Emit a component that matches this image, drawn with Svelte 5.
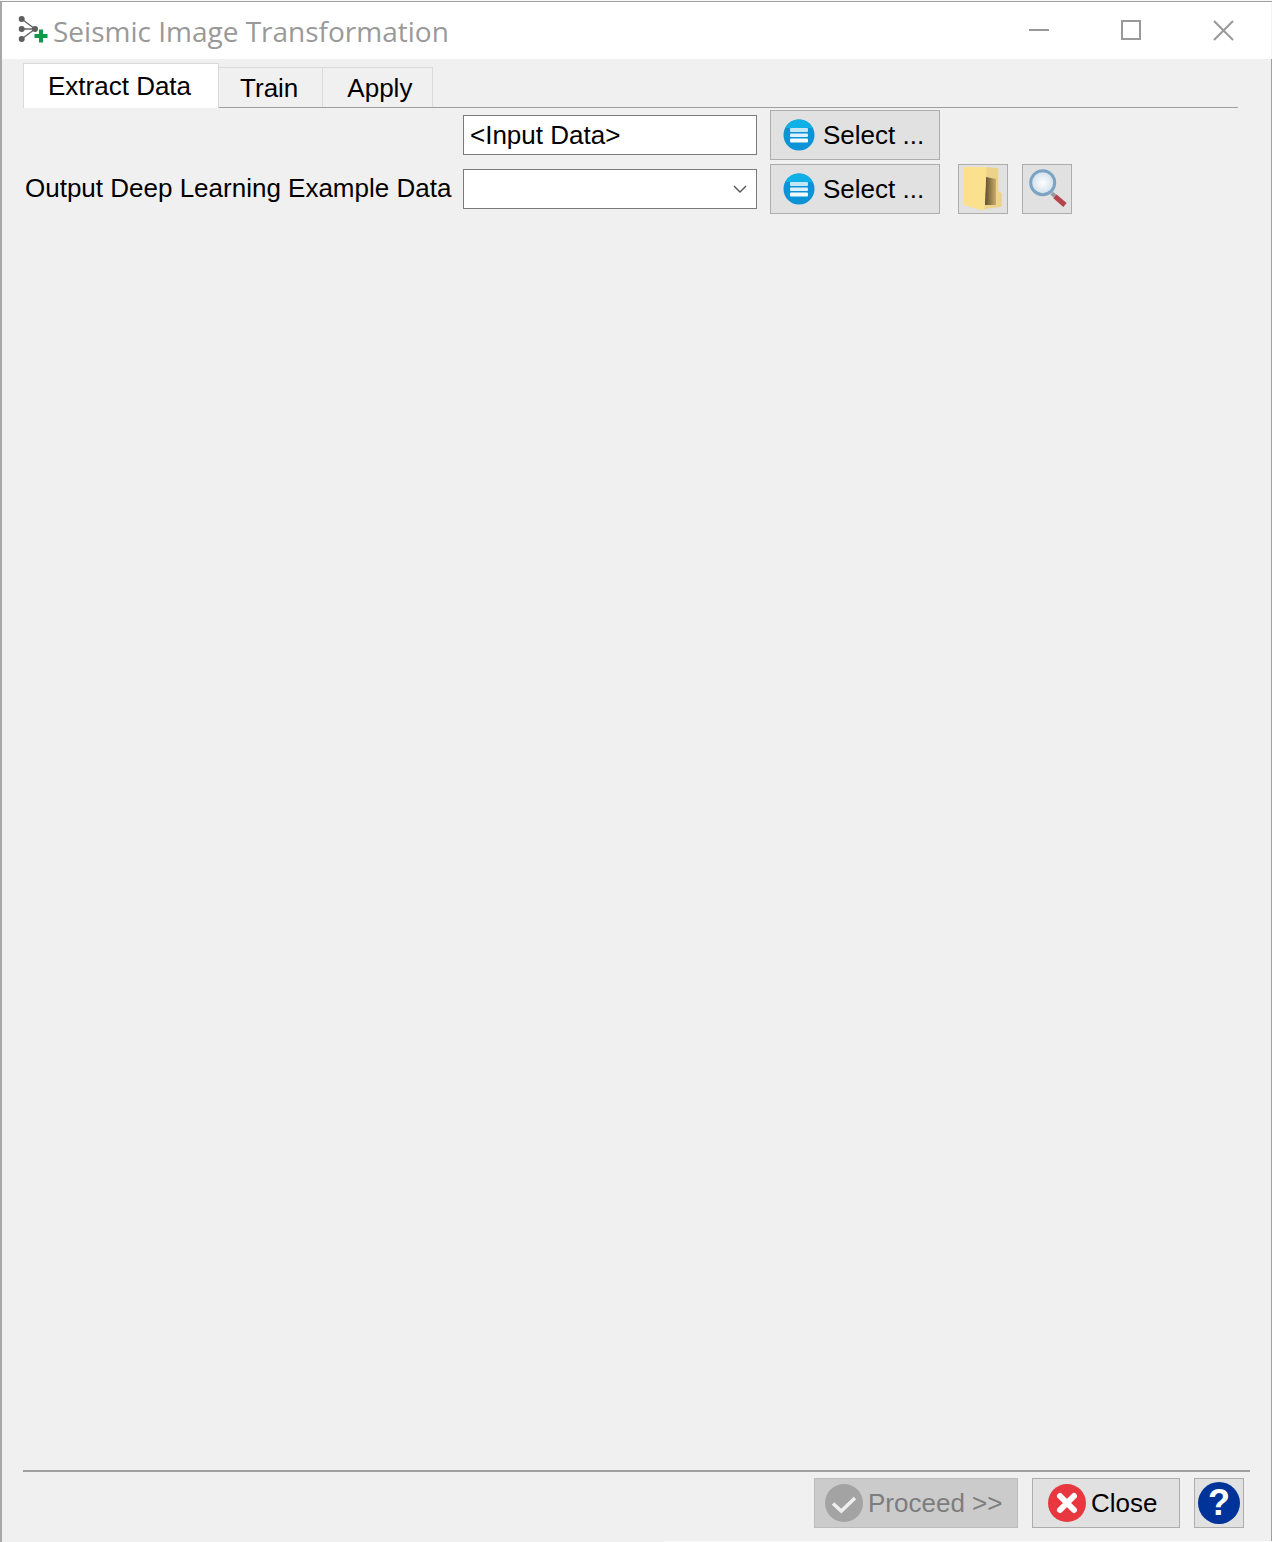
<script lang="ts">
	const rows = [
		{ id: "input", label: "", value: "<Input Data>", combo: false, tools: false },
		{ id: "output", label: "Output Deep Learning Example Data", value: "", combo: true, tools: true }
	];
</script>

<div class="window">
	<header class="titlebar">
		<svg class="app-icon" width="32" height="30" viewBox="0 0 32 30">
			<g stroke="#666" stroke-width="1.4" fill="none">
				<path d="M4.700 3 18 13H4.700M18 13 4.700 23" />
			</g>
			<g fill="#5f5f5f">
				<circle cx="4.700" cy="3" r="3" />
				<circle cx="4.700" cy="13" r="3" />
				<circle cx="4.700" cy="23" r="3" />
				<circle cx="18" cy="13" r="3" />
			</g>
			<path d="M22 13.500h4V18h4.500v4H26v4.500h-4V22h-4.500v-4H22z" fill="#0f9a4a" />
		</svg>
		<span class="title">Seismic Image Transformation</span>
		<div class="win-controls">
			<svg width="22" height="22" viewBox="0 0 22 22"><path d="M1 11h20" stroke="#999" stroke-width="2" /></svg>
			<svg width="22" height="22" viewBox="0 0 22 22"><rect x="2" y="2" width="18" height="18" fill="none" stroke="#999" stroke-width="2" /></svg>
			<svg width="22" height="22" viewBox="0 0 22 22"><path d="M2 2 21 21M21 2 2 21" stroke="#999" stroke-width="2" /></svg>
		</div>
	</header>

	<main class="content">
		<nav class="tabs">
			<div class="tab active">Extract Data</div>
			<div class="tab train">Train</div>
			<div class="tab apply">Apply</div>
		</nav>

		<section class="form">
			{#each rows as row (row.id)}
				<div class="label">{row.label}</div>
				<div class="field">
					<span>{row.value}</span>
					{#if row.combo}
						<svg width="16" height="10" viewBox="0 0 16 10"><path d="M2 2 8 8 14 2" fill="none" stroke="#555" stroke-width="1.400" /></svg>
					{/if}
				</div>
				<button class="btn select">
					<svg width="32" height="32" viewBox="0 0 32 32">
						<circle cx="16" cy="16" r="15.500" fill="#0b93d6" />
						<path d="M16 .5A15.500 15.500 0 0 1 30 9H2A15.500 15.500 0 0 1 16 .5z" fill="#0fb0e6" />
						<rect x="7" y="9" width="18" height="4" rx="1" fill="#c4e6f6" />
						<rect x="7" y="14.500" width="18" height="3.500" rx="1" fill="#dff2fb" />
						<rect x="7" y="19.500" width="18" height="4" rx="1" fill="#f4fbff" />
					</svg>
					<span>Select ...</span>
				</button>
				<div class="tools">
					{#if row.tools}
						<button class="btn square">
							<svg width="42" height="44" viewBox="0 0 42 44">
								<defs>
									<linearGradient id="folder-inner" x1="0" y1="0" x2="1" y2="0">
										<stop offset="0" stop-color="#5f4d2e" />
										<stop offset="1" stop-color="#c9ad6c" />
									</linearGradient>
								</defs>
								<path d="M24 0 36.300 1.300V24L39.700 26.300V39.700L22 42z" fill="#edd28a" />
								<path d="M24 10 34 12V38H23z" fill="url(#folder-inner)" />
								<path d="M1.300 0H24.700L22 43.700 1.300 38z" fill="#fbe18e" />
							</svg>
						</button>
						<button class="btn square">
							<svg width="44" height="44" viewBox="0 0 44 44">
								<defs>
									<radialGradient id="lens" cx=".5" cy=".5" r=".6">
										<stop offset="0" stop-color="#fdfefe" />
										<stop offset="1" stop-color="#c8d8e6" />
									</radialGradient>
								</defs>
								<path d="M26.700 26.300 31 30" stroke="#9a9a9a" stroke-width="4" />
								<path d="M30 29.300 40 38" stroke="#b5444b" stroke-width="5" />
								<circle cx="17.700" cy="15.700" r="12" fill="url(#lens)" stroke="#7ba4c4" stroke-width="3" />
							</svg>
						</button>
					{/if}
				</div>
			{/each}
		</section>

		<footer class="footer">
			<button class="btn action disabled">
				<svg width="38" height="38" viewBox="0 0 38 38">
					<circle cx="19" cy="19" r="19" fill="#a3a3a3" />
					<path d="M8 19.500 16.300 27 30 14" fill="none" stroke="#eee" stroke-width="3.500" />
				</svg>
				<span>Proceed &gt;&gt;</span>
			</button>
			<button class="btn action close">
				<svg width="38" height="38" viewBox="0 0 38 38">
					<circle cx="19" cy="19" r="19" fill="#e8373f" />
					<path d="M12 12 26 26M26 12 12 26" stroke="#fff" stroke-width="6" stroke-linecap="round" />
				</svg>
				<span>Close</span>
			</button>
			<button class="btn help">
				<span class="help-icon">?</span>
			</button>
		</footer>
	</main>
</div>

<style>
	:global(body) {
		background: #f8f8f8;
		font-family: "Liberation Sans", Arial, sans-serif;
	}

	.window {
		height: 1541px;
		margin-top: 1px;
		box-sizing: border-box;
		display: flex;
		flex-direction: column;
		border-top: 1px solid #a0a0a0;
		border-left: 2px solid #a8a8a8;
		overflow: hidden;
		position: relative;
	}

	/* sliver of the window behind, along the bottom edge */
	.window::after {
		content: "";
		position: absolute;
		left: 662px;
		right: 0;
		bottom: 0;
		height: 1px;
		background: #fbfbfb;
	}

	.titlebar {
		height: 57px;
		flex: none;
		background: #fff;
		border-right: 1px solid #f4f4f4;
		display: flex;
		align-items: center;
		padding-left: 15px;
	}

	.app-icon {
		margin-right: 4px;
	}

	.title {
		font-family: "Open Sans", sans-serif;
		font-size: 28px;
		color: #999;
	}

	.win-controls {
		margin-left: auto;
		display: flex;
		gap: 70px;
		padding-right: 37px;
		align-items: center;
		margin-top: -1px;
	}

	.content {
		flex: 1;
		display: flex;
		flex-direction: column;
		background: #f0f0f0;
		border-right: 1px solid #a0a0a0;
		padding: 4px 21px 14px 21px;
		min-height: 0;
		font-size: 26px;
		color: #000;
	}

	.tabs {
		display: flex;
		align-items: flex-end;
		height: 45px;
		margin-right: 12px;
		border-bottom: 1px solid #a0a0a0;
		box-sizing: border-box;
	}

	.tab {
		height: 40px;
		box-sizing: border-box;
		display: flex;
		align-items: center;
		background: #f0f0f0;
		border: 1px solid #d9d9d9;
		border-left: 0;
		border-bottom: 0;
		padding-top: 2px;
	}

	.tab.train {
		padding-left: 21px;
		padding-right: 24px;
	}

	.tab.apply {
		padding-left: 24px;
		padding-right: 20px;
	}

	.tab.active {
		height: 45px;
		margin-bottom: -1px;
		background: #fff;
		padding: 0 27px 0 24px;
		border-left: 1px solid #d9d9d9;
	}

	.form {
		display: grid;
		grid-template-columns: 440px 294px 183px 1fr;
		grid-auto-rows: 50px;
		gap: 4px 0;
		padding-top: 2px;
		flex: 1;
		align-content: start;
		align-items: center;
	}

	.label {
		padding-left: 2px;
		padding-bottom: 2px;
		white-space: nowrap;
	}

	.field {
		height: 40px;
		box-sizing: border-box;
		background: #fff;
		border: 1px solid #7a7a7a;
		display: flex;
		align-items: center;
		justify-content: space-between;
		padding: 0 8px 0 6px;
		white-space: pre;
	}

	.btn {
		font: inherit;
		color: #000;
		background: #e1e1e1;
		border: 1px solid #adadad;
		height: 50px;
		box-sizing: border-box;
		display: flex;
		align-items: center;
		padding: 0;
	}

	.select {
		margin-left: 13px;
		width: 170px;
		padding-left: 12px;
		gap: 8px;
	}

	.tools {
		display: flex;
		gap: 14px;
		padding-left: 18px;
	}

	.square {
		width: 50px;
		justify-content: center;
	}

	.footer {
		border-top: 2px solid #a0a0a0;
		padding-top: 6px;
		display: flex;
		justify-content: flex-end;
		gap: 14px;
	}

	.action {
		padding-left: 10px;
		gap: 5px;
		width: 148px;
	}

	.action.close {
		padding-left: 15px;
	}

	.action.disabled {
		width: 204px;
		background: #cbcbcb;
		color: #7d7d7d;
		border-color: #bcbcbc;
	}

	.help {
		width: 50px;
		justify-content: center;
		margin-right: 6px;
	}

	.help-icon {
		width: 42px;
		height: 42px;
		border-radius: 50%;
		background: #003399;
		color: #fff;
		font-weight: bold;
		font-size: 36px;
		display: flex;
		align-items: center;
		justify-content: center;
	}
</style>
